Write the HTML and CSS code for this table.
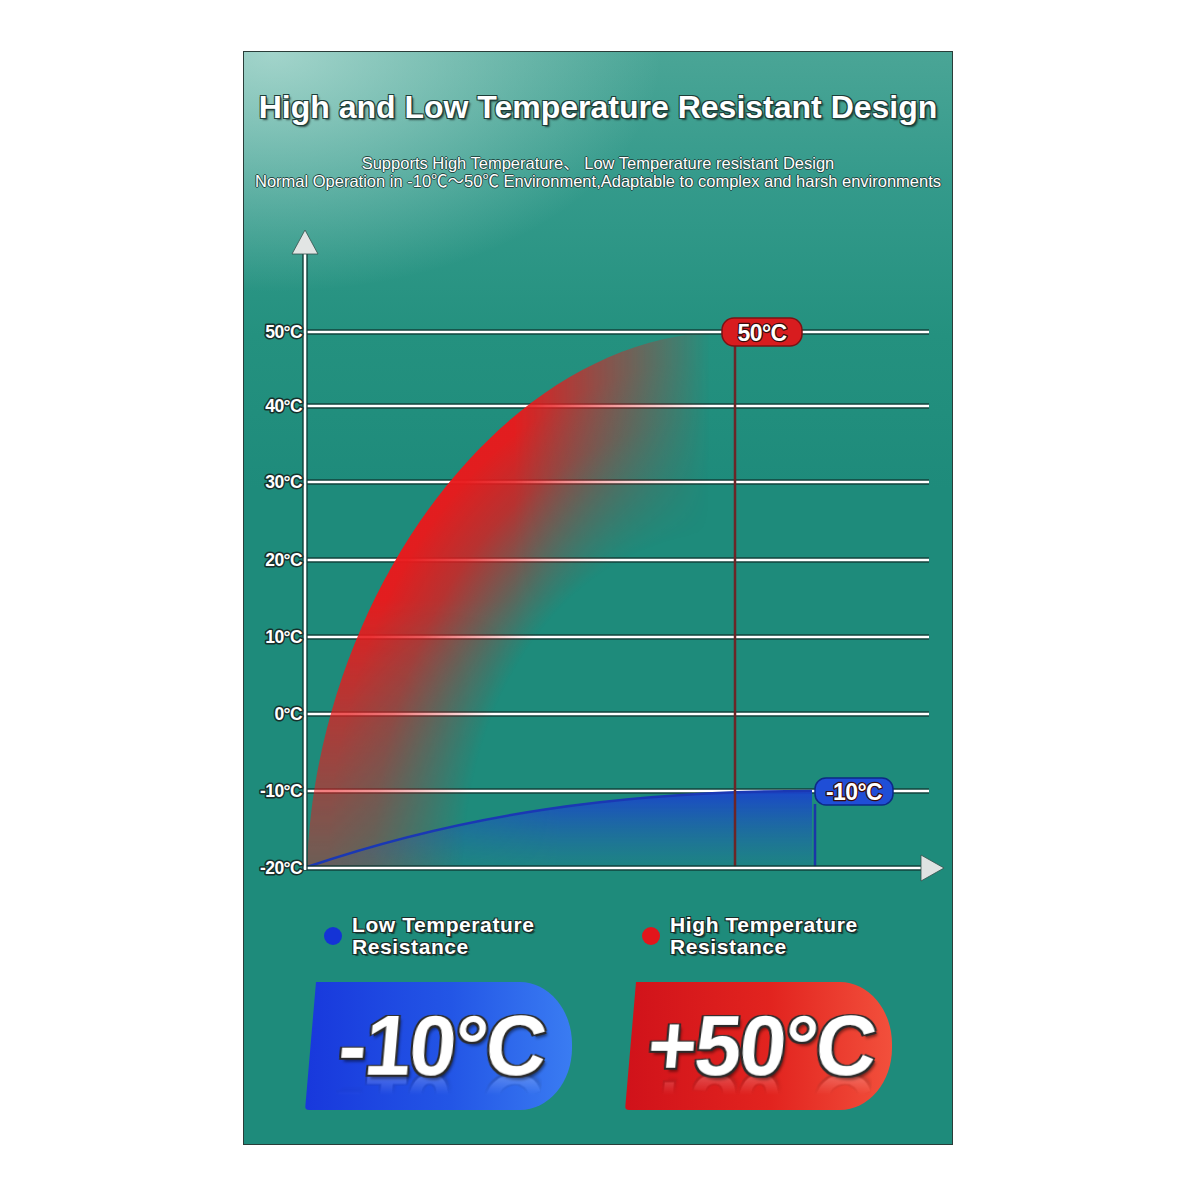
FILE: index.html
```html
<!DOCTYPE html>
<html lang="en">
<head>
<meta charset="utf-8">
<title>High and Low Temperature Resistant Design</title>
<link rel="stylesheet" href="styles.css">
</head>
<body>
<div class="panel">
  <header class="head">
    <h1 class="title">High and Low Temperature Resistant Design</h1>
    <p class="sub">Supports High Temperature、 Low Temperature resistant Design<br>Normal Operation in -10℃～50℃ Environment,Adaptable to complex and harsh environments</p>
  </header>
  <svg class="chart" width="708" height="670" viewBox="244 220 708 670" xmlns="http://www.w3.org/2000/svg">
    <defs>
      <radialGradient id="redg" cx="1" cy="1" r="1" gradientUnits="objectBoundingBox">
        <stop offset="0.62" stop-color="#e21a1c" stop-opacity="0"/>
        <stop offset="0.84" stop-color="#e21a1c" stop-opacity="0.78"/>
        <stop offset="0.95" stop-color="#e81a1c" stop-opacity="0.97"/>
      </radialGradient>
      <linearGradient id="rfade" x1="307" y1="0" x2="722" y2="0" gradientUnits="userSpaceOnUse">
        <stop offset="0" stop-color="#fff"/>
        <stop offset="0.5" stop-color="#fff"/>
        <stop offset="0.97" stop-color="#000"/>
      </linearGradient>
      <linearGradient id="vdark" x1="0" y1="600" x2="0" y2="868" gradientUnits="userSpaceOnUse">
        <stop offset="0" stop-color="#000" stop-opacity="0"/>
        <stop offset="1" stop-color="#000" stop-opacity="0.6"/>
      </linearGradient>
      <mask id="rmask" maskUnits="userSpaceOnUse" x="290" y="300" width="450" height="590">
        <rect x="290" y="300" width="450" height="590" fill="url(#rfade)"/>
        <rect x="290" y="300" width="450" height="590" fill="url(#vdark)"/>
      </mask>
      <linearGradient id="blueg" x1="0" y1="791" x2="0" y2="868" gradientUnits="userSpaceOnUse">
        <stop offset="0" stop-color="#1a44cc" stop-opacity="0.95"/>
        <stop offset="1" stop-color="#2062b0" stop-opacity="0.15"/>
      </linearGradient>
      <linearGradient id="bfade" x1="307" y1="0" x2="812" y2="0" gradientUnits="userSpaceOnUse">
        <stop offset="0" stop-color="#666"/>
        <stop offset="0.5" stop-color="#fff"/>
        <stop offset="1" stop-color="#fff"/>
      </linearGradient>
      <mask id="bmask" maskUnits="userSpaceOnUse" x="290" y="770" width="540" height="110">
        <rect x="290" y="770" width="540" height="110" fill="url(#bfade)"/>
      </mask>
    </defs>

    <g class="grid">
      <line class="gd" x1="307" x2="929" y1="332" y2="332"/><line class="gw" x1="307" x2="929" y1="332" y2="332"/>
      <line class="gd" x1="307" x2="929" y1="406" y2="406"/><line class="gw" x1="307" x2="929" y1="406" y2="406"/>
      <line class="gd" x1="307" x2="929" y1="482" y2="482"/><line class="gw" x1="307" x2="929" y1="482" y2="482"/>
      <line class="gd" x1="307" x2="929" y1="560" y2="560"/><line class="gw" x1="307" x2="929" y1="560" y2="560"/>
      <line class="gd" x1="307" x2="929" y1="637" y2="637"/><line class="gw" x1="307" x2="929" y1="637" y2="637"/>
      <line class="gd" x1="307" x2="929" y1="714" y2="714"/><line class="gw" x1="307" x2="929" y1="714" y2="714"/>
      <line class="gd" x1="307" x2="929" y1="791" y2="791"/><line class="gw" x1="307" x2="929" y1="791" y2="791"/>
    </g>

    <path d="M307,868 C315,600 500,338 720,332 L720,868 Z" fill="url(#redg)" mask="url(#rmask)"/>
    <path d="M307,868 C460,815 620,791 812,791 L812,868 Z" fill="url(#blueg)" mask="url(#bmask)"/>
    <path d="M307,867 C460,815 620,791 812,791" fill="none" stroke="#1a38b4" stroke-width="2.5"/>

    <line x1="735" y1="344" x2="735" y2="868" stroke="#6b2527" stroke-width="2.5"/>
    <line x1="815" y1="804" x2="815" y2="868" stroke="#1b36a8" stroke-width="2.5"/>

    <line class="gd" x1="303" x2="925" y1="868" y2="868"/><line class="gw" x1="303" x2="925" y1="868" y2="868"/>
    <polygon points="944,868 921,855 921,881" fill="#dfe3e2" stroke="#33504b" stroke-width="0.8"/>
    <line class="gd" x1="305" x2="305" y1="252" y2="870"/><line class="gw" x1="305" x2="305" y1="252" y2="870"/>
    <polygon points="305,230 292,254 318,254" fill="#e2e5e4" stroke="#33504b" stroke-width="0.8"/>

    <g class="ylab">
      <text x="302" y="338">50°C</text>
      <text x="302" y="412">40°C</text>
      <text x="302" y="488">30°C</text>
      <text x="302" y="566">20°C</text>
      <text x="302" y="643">10°C</text>
      <text x="302" y="720">0°C</text>
      <text x="302" y="797">-10°C</text>
      <text x="302" y="874">-20°C</text>
    </g>

    <rect x="722" y="318" width="80" height="28" rx="12" fill="#d81c1f" stroke="#7c1214" stroke-width="1.5"/>
    <text class="pill" x="762" y="340.5">50°C</text>
    <rect x="815" y="778" width="78" height="27" rx="11" fill="#1f4ed6" stroke="#0d2a86" stroke-width="1.5"/>
    <text class="pill" x="854" y="800">-10°C</text>
  </svg>

  <div class="bottom">
    <div class="legend">
      <span class="dot dot-blue"></span>
      <span class="ltext"><span class="lline">Low Temperature</span><span class="lline">Resistance</span></span>
    </div>
    <div class="legend">
      <span class="dot dot-red"></span>
      <span class="ltext"><span class="lline">High Temperature</span><span class="lline">Resistance</span></span>
    </div>
    <div class="badge badge-blue"><span class="big">-10°C</span></div>
    <div class="badge badge-red"><span class="big">+50°C</span></div>
  </div>
</div>
</body>
</html>
```

FILE: styles.css
```css
html, body {
  margin: 0;
  padding: 0;
  background: #ffffff;
}

body {
  font-family: "Liberation Sans", Arial, "Noto Sans CJK SC", sans-serif;
}

.panel {
  box-sizing: border-box;
  width: 710px;
  height: 1094px;
  margin: 51px 0 0 243px;
  border: 1px solid #2a3d39;
  background:
    radial-gradient(ellipse 55% 22% at 4% 0%, rgba(200, 232, 225, 0.7), rgba(200, 232, 225, 0) 100%),
    linear-gradient(180deg, #4aa596 0%, #349a8b 12%, #24917f 26%, #1e8b7b 40%, #1e8b7b 100%);
  overflow: hidden;
}

.head {
  padding-top: 35px;
  height: 133px;
  text-align: center;
  color: #ffffff;
}

.title {
  margin: 0;
  font-size: 32px;
  line-height: 40px;
  font-weight: 700;
  text-shadow:
    -1px -1px 0 #1d3e39, 1px -1px 0 #1d3e39, -1px 1px 0 #1d3e39, 1px 1px 0 #1d3e39,
    2px 2px 2px rgba(0, 0, 0, 0.6);
}

.sub {
  margin: 27px 0 0;
  font-size: 16.5px;
  line-height: 18px;
  letter-spacing: 0;
  white-space: nowrap;
  text-shadow:
    -1px 0 0 #244a44, 1px 0 0 #244a44, 0 -1px 0 #244a44, 0 1px 0 #244a44;
}

.chart {
  display: block;
}

.gd {
  stroke: #0f3530;
  stroke-width: 5.5;
  stroke-opacity: 0.85;
}

.gw {
  stroke: #ffffff;
  stroke-width: 2.6;
}

.ylab text {
  font-family: "Liberation Sans", Arial, sans-serif;
  font-weight: 700;
  font-size: 17.5px;
  letter-spacing: -0.6px;
  text-anchor: end;
  fill: #ffffff;
  stroke: #17302c;
  stroke-width: 3px;
  paint-order: stroke;
  stroke-linejoin: round;
}

.pill {
  font-family: "Liberation Sans", Arial, sans-serif;
  font-weight: 700;
  font-size: 23px;
  letter-spacing: -0.6px;
  text-anchor: middle;
  fill: #ffffff;
  stroke: #3a0c0c;
  stroke-width: 2.5px;
  paint-order: stroke;
  stroke-linejoin: round;
}

.bottom {
  display: grid;
  grid-template-columns: 320px 268px;
  row-gap: 24px;
  padding-left: 61px;
  margin-top: 24px;
}

.legend {
  display: flex;
  align-items: center;
  gap: 10px;
  padding-left: 19px;
  height: 44px;
}

.legend + .legend {
  padding-left: 17px;
}

.dot {
  width: 18px;
  height: 18px;
  border-radius: 50%;
  flex: none;
}

.dot-blue {
  background: #1433d6;
}

.dot-red {
  background: #e3151b;
}

.ltext {
  display: flex;
  flex-direction: column;
  color: #ffffff;
  font-size: 21px;
  line-height: 22px;
  font-weight: 700;
  letter-spacing: 0.6px;
  text-shadow:
    -1px -1px 0 #1c2d2a, 1px -1px 0 #1c2d2a, -1px 1px 0 #1c2d2a, 1px 1px 0 #1c2d2a,
    2px 2px 1px rgba(0, 0, 0, 0.5);
}

.lline {
  display: block;
  height: 22px;
}

.badge {
  width: 267px;
  height: 128px;
  display: flex;
  align-items: center;
  justify-content: center;
  border-radius: 4px 52px 52px 4px / 4px 62px 62px 4px;
  clip-path: polygon(11px 0, 100% 0, 100% 100%, 0 100%);
  box-sizing: border-box;
  padding-left: 6px;
}

.badge-blue {
  background: linear-gradient(90deg, #1838dc 0%, #2356e6 55%, #3a7cf2 100%);
}

.badge-red {
  background: linear-gradient(90deg, #d0121a 0%, #e2241f 55%, #f2503c 100%);
}

.big {
  color: #ffffff;
  font-size: 84px;
  line-height: 80px;
  font-weight: 700;
  letter-spacing: -2px;
  transform: skewX(-5deg);
  text-shadow:
    -2px -1px 0 #2a2a2a, 2px -1px 0 #2a2a2a, -2px 2px 0 #2a2a2a, 2px 2px 0 #2a2a2a,
    3px 4px 3px rgba(0, 0, 0, 0.45);
  -webkit-box-reflect: below -22px linear-gradient(transparent 62%, rgba(255, 255, 255, 0.35));
}
```
